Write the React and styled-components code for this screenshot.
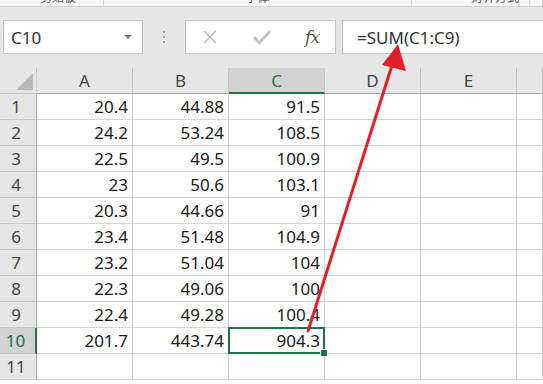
import React from "react";
import styled, { createGlobalStyle, css } from "styled-components";

const GlobalStyle = createGlobalStyle`
  html, body { margin: 0; padding: 0; background: #ffffff; overflow: hidden; }
  body { font-family: "Noto Sans", "Noto Sans CJK SC", sans-serif; }
`;

const Page = styled.div`
  position: relative;
  width: 543px;
  height: 384px;
  overflow: hidden;
  background: #ffffff;
`;

const RibbonStrip = styled.div`
  height: 6px;
  background: #f7f7f7;
  border-bottom: 1px solid #d4d4d4;
  display: flex;
  overflow: hidden;
`;

const RibbonGroup = styled.div`
  width: ${(p) => p.$w}px;
  flex: ${(p) => (p.$grow ? "1" : "none")};
  border-right: 1px solid #d8d8d8;
  display: flex;
  justify-content: ${(p) => p.$align || "center"};
  padding: ${(p) => p.$pad || "0"};
  box-sizing: border-box;
`;

const RibbonLabel = styled.span`
  font-size: 12px;
  line-height: 12px;
  margin-top: -9px;
  color: #555;
  font-family: "Noto Sans CJK SC", sans-serif;
`;

const FormulaBar = styled.div`
  height: 61px;
  background: #e6e6e6;
  display: flex;
  align-items: flex-start;
  padding: 13px 0 0 3px;
  box-sizing: border-box;
`;

const NameBox = styled.div`
  width: 140px;
  height: 34px;
  box-sizing: border-box;
  background: #ffffff;
  border: 1px solid #c6c6c6;
  display: flex;
  align-items: center;
  justify-content: space-between;
  padding: 0 10px 0 7px;
  font-size: 17px;
  color: #333;
`;

const DropTriangle = styled.span`
  width: 0;
  height: 0;
  border-left: 4px solid transparent;
  border-right: 4px solid transparent;
  border-top: 4px solid #7a7a7a;
`;

const Grip = styled.div`
  width: 42px;
  height: 34px;
  display: flex;
  flex-direction: column;
  align-items: center;
  justify-content: center;
  gap: 3px;
`;

const GripDot = styled.span`
  width: 2px;
  height: 2px;
  background: #a8a8a8;
`;

const ButtonsBox = styled.div`
  width: 151px;
  height: 34px;
  box-sizing: border-box;
  background: #ffffff;
  border: 1px solid #c6c6c6;
  display: flex;
  align-items: center;
  justify-content: space-between;
  padding: 0 16px 0 16px;
`;

const FxLabel = styled.span`
  font-family: "DejaVu Serif", "Liberation Serif", serif;
  font-style: italic;
  font-size: 17px;
  color: #555;
  letter-spacing: -1px;
`;

const FormulaBox = styled.div`
  flex: 1;
  height: 34px;
  margin-left: 6px;
  margin-right: -3px;
  box-sizing: border-box;
  background: #ffffff;
  border: 1px solid #c6c6c6;
  display: flex;
  align-items: center;
  padding-left: 14px;
  font-size: 17px;
  color: #333;
`;

const Grid = styled.div`
  display: grid;
  grid-template-columns: 37px repeat(5, 96px) 1fr;
  grid-auto-rows: 26px;
`;

const headerBase = css`
  background: ${(p) => (p.$active ? "#d2d2d2" : "#e6e6e6")};
  color: ${(p) => (p.$active ? "#217346" : "#444")};
  font-size: 17px;
  display: flex;
  align-items: center;
  box-sizing: border-box;
`;

const Corner = styled.div`
  ${headerBase};
  border-right: 1px solid #c6c6c6;
  border-bottom: 1px solid #c6c6c6;
  justify-content: flex-end;
  align-items: flex-end;
  padding: 0 3px 3px 0;
`;

const CornerTriangle = styled.span`
  width: 0;
  height: 0;
  border-left: 17px solid transparent;
  border-bottom: 17px solid #b9b9b9;
`;

const ColHeader = styled.div`
  ${headerBase};
  justify-content: center;
  border-right: 1px solid #c6c6c6;
  border-bottom: ${(p) => (p.$active ? "2px solid #217346" : "1px solid #ababab")};
  padding-top: ${(p) => (p.$active ? "1px" : "0")};
`;

const RowHeader = styled.div`
  ${headerBase};
  justify-content: center;
  padding-right: 4px;
  border-right: ${(p) => (p.$active ? "2px solid #217346" : "1px solid #ababab")};
  border-bottom: 1px solid #c6c6c6;
`;

const Cell = styled.div`
  position: relative;
  box-sizing: border-box;
  border-right: 1px solid #d4d4d4;
  border-bottom: 1px solid #d4d4d4;
  display: flex;
  align-items: center;
  justify-content: flex-end;
  padding-right: 4px;
  font-size: 17px;
  color: #1a1a1a;
  ${(p) =>
    p.$selected &&
    css`
      &::after {
        content: "";
        position: absolute;
        left: -1px;
        top: -1px;
        right: -1px;
        bottom: -1px;
        border: 2px solid #217346;
        pointer-events: none;
      }
      &::before {
        content: "";
        position: absolute;
        right: -4px;
        bottom: -4px;
        width: 6px;
        height: 6px;
        background: #217346;
        border: 1px solid #ffffff;
        z-index: 2;
      }
    `}
`;

const ArrowLayer = styled.svg`
  position: absolute;
  left: 0;
  top: 0;
  width: 543px;
  height: 384px;
  pointer-events: none;
`;

const data = [
  ["20.4", "44.88", "91.5"],
  ["24.2", "53.24", "108.5"],
  ["22.5", "49.5", "100.9"],
  ["23", "50.6", "103.1"],
  ["20.3", "44.66", "91"],
  ["23.4", "51.48", "104.9"],
  ["23.2", "51.04", "104"],
  ["22.3", "49.06", "100"],
  ["22.4", "49.28", "100.4"],
  ["201.7", "443.74", "904.3"],
  ["", "", ""],
];

const cols = ["A", "B", "C", "D", "E", ""];

export default function App() {
  return (
    <Page>
      <GlobalStyle />
      <RibbonStrip>
        <RibbonGroup $w={104} $align="flex-start" $pad="0 0 0 40px">
          <RibbonLabel>剪贴板</RibbonLabel>
        </RibbonGroup>
        <RibbonGroup $w={308}>
          <RibbonLabel>字体</RibbonLabel>
        </RibbonGroup>
        <RibbonGroup $w={118} $align="flex-end" $pad="0 10px 0 0">
          <RibbonLabel>对齐方式</RibbonLabel>
        </RibbonGroup>
        <RibbonGroup $grow />
      </RibbonStrip>
      <FormulaBar>
        <NameBox>
          <span>C10</span>
          <DropTriangle />
        </NameBox>
        <Grip>
          <GripDot />
          <GripDot />
          <GripDot />
        </Grip>
        <ButtonsBox>
          <svg width="16" height="16" viewBox="0 0 16 16">
            <path d="M2 2 L14 14 M14 2 L2 14" stroke="#b8b8b8" strokeWidth="1.4" fill="none" />
          </svg>
          <svg width="20" height="16" viewBox="0 0 20 16">
            <path d="M2 8 L7.5 13.5 L18 2.5" stroke="#c2c2c2" strokeWidth="3" fill="none" />
          </svg>
          <FxLabel>fx</FxLabel>
        </ButtonsBox>
        <FormulaBox>=SUM(C1:C9)</FormulaBox>
      </FormulaBar>
      <Grid>
        <Corner>
          <CornerTriangle />
        </Corner>
        {cols.map((c, i) => (
          <ColHeader key={"h" + i} $active={c === "C"}>
            {c}
          </ColHeader>
        ))}
        {data.map((row, r) => (
          <React.Fragment key={r}>
            <RowHeader $active={r === 9}>{r + 1}</RowHeader>
            {row.map((v, c) => (
              <Cell key={c} $selected={r === 9 && c === 2}>
                {v}
              </Cell>
            ))}
            <Cell />
            <Cell />
            <Cell />
          </React.Fragment>
        ))}
      </Grid>
      <ArrowLayer viewBox="0 0 543 384">
        <line x1="308" y1="331" x2="393" y2="62" stroke="#e3202a" strokeWidth="3" strokeLinecap="round" />
        <polygon points="398,44 406,71 382,65" fill="#e3202a" />
      </ArrowLayer>
    </Page>
  );
}
